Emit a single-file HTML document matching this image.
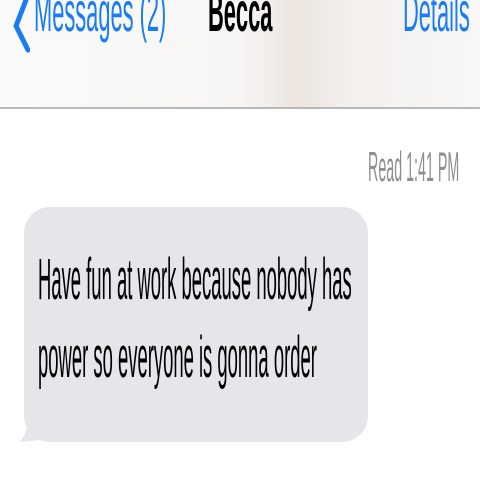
<!DOCTYPE html>
<html><head><style>
body{margin:0;width:480px;height:480px;overflow:hidden;background:#fff;position:relative;font-family:"Liberation Sans",sans-serif}
.hdr{position:absolute;left:0;top:0;width:480px;height:107px;background:linear-gradient(90deg,#fafafa 0%,#f7f6f5 50%,#ece5e0 62%,#f3efec 72%,#f8f8f8 100%);border-bottom:2px solid #b9b9b9}
.t{position:absolute;white-space:nowrap;transform-origin:0 0;line-height:1}
.bub{position:absolute;left:24px;top:207px;width:344px;height:235px;background:#e5e5ea;border-radius:26px}
</style></head><body>
<div class="hdr"></div>
<svg style="position:absolute;left:8px;top:0" width="22" height="55"><path d="M18 0 L8 26 L20 50" stroke="#1a7cf5" stroke-width="5" fill="none" stroke-linecap="round"/></svg>
<div class="t" style="left:34px;top:-16px;font-size:56px;color:#1a7cf5;transform:scaleX(0.39)">Messages (2)</div>
<div class="t" style="left:208px;top:-16px;font-size:56px;font-weight:bold;color:#000;transform:scaleX(0.39)">Becca</div>
<div class="t" style="left:403px;top:-16px;font-size:56px;color:#1a7cf5;transform:scaleX(0.39)">Details</div>
<div class="t" style="left:368px;top:146px;font-size:42px;color:#8e8e93;transform:scaleX(0.34)">Read 1:41 PM</div>
<div class="bub"></div>
<svg style="position:absolute;left:10px;top:400px" width="40" height="45"><path d="M30 0 L30 40 L10 42 Q20 30 20 0 Z" fill="#e5e5ea"/></svg>
<div class="t" style="left:38px;top:251px;font-size:58px;color:#000;transform:scaleX(0.318)">Have fun at work because nobody has</div>
<div class="t" style="left:38px;top:329px;font-size:58px;color:#000;transform:scaleX(0.318)">power so everyone is gonna order</div>
</body></html>
